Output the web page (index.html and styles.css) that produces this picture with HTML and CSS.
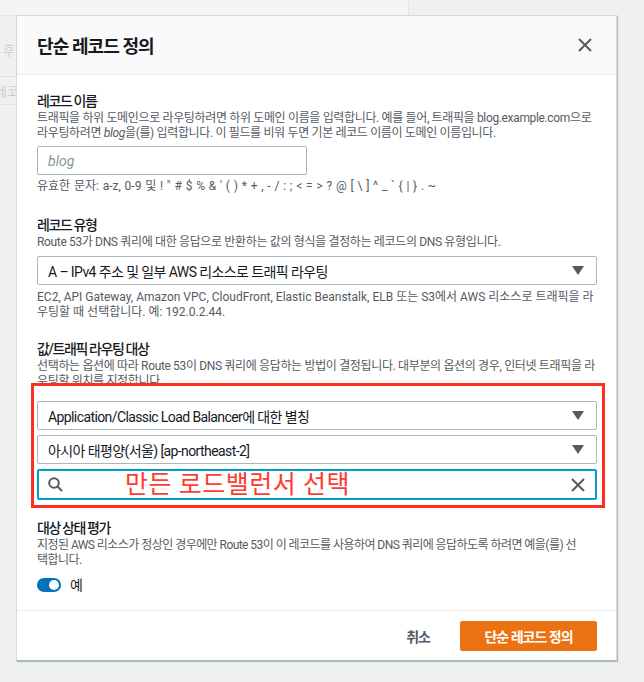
FILE: index.html
```html
<!DOCTYPE html>
<html lang="ko">
<head>
<meta charset="utf-8">
<title>단순 레코드 정의</title>
<link rel="stylesheet" href="styles.css">
</head>
<body>
<div class="bg-page">
  <div class="bg-strip"></div>
  <div class="bg-text">후</div>
  <div class="bg-cell"><span class="bg-cell-text">레코드</span></div>
</div>

<div class="modal">
  <div class="modal-header">
    <h2 class="modal-title">단순 레코드 정의</h2>
    <svg class="icon-close" width="14" height="14" viewBox="0 0 14 14"><path d="M1 1 L13 13 M13 1 L1 13" stroke="#545b64" stroke-width="2" fill="none"/></svg>
  </div>

  <div class="modal-body">
    <div class="field">
      <div class="label">레코드 이름</div>
      <div class="desc">트래픽을 하위 도메인으로 라우팅하려면 하위 도메인 이름을 입력합니다. 예를 들어, 트래픽을 blog.example.com으로<br>라우팅하려면 <i>blog</i>을(를) 입력합니다. 이 필드를 비워 두면 기본 레코드 이름이 도메인 이름입니다.</div>
      <div class="input short"><span class="placeholder">blog</span></div>
      <div class="desc hint chars">유효한 문자: a-z, 0-9 및 ! " # $ % &amp; ' ( ) * + , - / : ; &lt; = &gt; ? @ [ \ ] ^ _ ` { | } . ~</div>
    </div>

    <div class="field">
      <div class="label">레코드 유형</div>
      <div class="desc">Route 53가 DNS 쿼리에 대한 응답으로 반환하는 값의 형식을 결정하는 레코드의 DNS 유형입니다.</div>
      <div class="select"><span>A – IPv4 주소 및 일부 AWS 리소스로 트래픽 라우팅</span><span class="caret"></span></div>
      <div class="desc hint">EC2, API Gateway, Amazon VPC, CloudFront, Elastic Beanstalk, ELB 또는 S3에서 AWS 리소스로 트래픽을 라<br>우팅할 때 선택합니다. 예: 192.0.2.44.</div>
    </div>

    <div class="field target">
      <div class="label">값/트래픽 라우팅 대상</div>
      <div class="desc">선택하는 옵션에 따라 Route 53이 DNS 쿼리에 응답하는 방법이 결정됩니다. 대부분의 옵션의 경우, 인터넷 트래픽을 라<br>우팅할 위치를 지정합니다.</div>
      <div class="stack">
        <div class="select"><span>Application/Classic Load Balancer에 대한 별칭</span><span class="caret"></span></div>
        <div class="select"><span>아시아 태평양(서울) [ap-northeast-2]</span><span class="caret"></span></div>
        <div class="search">
          <svg class="icon-search" width="15" height="15" viewBox="0 0 15 15"><circle cx="6" cy="6" r="4.8" stroke="#545b64" stroke-width="2" fill="none"/><path d="M9.5 9.5 L14 14" stroke="#545b64" stroke-width="2"/></svg>
          <span class="annot-text">만든 로드밸런서 선택</span>
          <svg class="icon-clear" width="14" height="14" viewBox="0 0 14 14"><path d="M1 1 L13 13 M13 1 L1 13" stroke="#545b64" stroke-width="2" fill="none"/></svg>
        </div>
      </div>
      <div class="annot-box"></div>
    </div>

    <div class="field last">
      <div class="label">대상 상태 평가</div>
      <div class="desc tight">지정된 AWS 리소스가 정상인 경우에만 Route 53이 이 레코드를 사용하여 DNS 쿼리에 응답하도록 하려면 예을(를) 선<br>택합니다.</div>
      <div class="toggle-row"><span class="toggle"><span class="knob"></span></span><span class="toggle-label">예</span></div>
    </div>
  </div>

  <div class="modal-footer">
    <button class="btn-link">취소</button>
    <button class="btn-primary">단순 레코드 정의</button>
  </div>
</div>
</body>
</html>
```

FILE: styles.css
```css
* { box-sizing: border-box; }
html, body { margin: 0; padding: 0; }
body {
  width: 644px;
  height: 682px;
  background: #eff0f0;
  font-family: Roboto, "Noto Sans CJK KR", sans-serif;
  color: #16191f;
  position: relative;
  overflow: hidden;
}

/* faded page behind the modal */
.bg-page { width: 409px; }
.bg-strip {
  height: 16px;
  background: #f3f4f4;
  border-right: 1px solid #e3e5e5;
  border-bottom: 1px solid #e3e5e5;
}
.bg-text {
  margin-top: 24px;
  padding-left: 3px;
  font-size: 13px;
  color: #c9cdcd;
  height: 20px;
}
.bg-cell {
  margin-top: 16px;
  height: 29px;
  border-top: 1px solid #e1e3e3;
  border-bottom: 1px solid #e1e3e3;
  overflow: hidden;
  line-height: 27px;
}
.bg-cell-text {
  margin-left: -5px;
  font-size: 13px;
  color: #c9cdcd;
}

/* modal overlay */
.modal {
  position: absolute;
  left: 16px;
  top: 15px;
  width: 601px;
  background: #fff;
  border: 1px solid #d5dbdb;
  border-bottom-color: #aab7b8;
  box-shadow: 1px 1px 1px rgba(0, 28, 36, 0.25);
}
.modal-header {
  height: 59px;
  background: #fafafa;
  border-bottom: 1px solid #eaeded;
  display: flex;
  align-items: center;
  justify-content: space-between;
  padding: 0 24px 0 20px;
}
.modal-title {
  margin: 0;
  font-size: 18px;
  font-weight: 700;
  letter-spacing: -0.9px;
  color: #16191f;
}
.icon-close { display: block; }

.modal-body {
  padding: 16px 19px 18px 20px;
  display: flex;
  flex-direction: column;
  gap: 19px;
}
.field { display: flex; flex-direction: column; }
.field.last { margin-top: -1px; }
.label {
  font-size: 14px;
  line-height: 20px;
  font-weight: 500;
  letter-spacing: -1.4px;
  color: #16191f;
}
.desc {
  font-size: 12px;
  line-height: 15px;
  letter-spacing: -0.35px;
  color: #545b64;
}
.desc.tight { letter-spacing: -0.55px; }
.desc i { font-style: italic; }
.hint { margin-top: 5px; letter-spacing: 0; }
.chars {
  margin-top: 4px;
  margin-bottom: 2px;
  word-spacing: 0.8px;
}

.input {
  margin-top: 5px;
  height: 29px;
  border: 1px solid #aab7b8;
  border-radius: 2px;
  display: flex;
  align-items: center;
  padding: 0 10px;
}
.input.short { width: 270px; }
.placeholder {
  font-size: 14px;
  font-style: italic;
  color: #879596;
}

.select {
  margin-top: 6px;
  height: 29px;
  border: 1px solid #aab7b8;
  border-radius: 2px;
  display: flex;
  align-items: center;
  justify-content: space-between;
  padding: 0 12px 0 10px;
  font-size: 14px;
  letter-spacing: -0.6px;
  color: #16191f;
}
.caret {
  width: 0;
  height: 0;
  border-left: 6px solid transparent;
  border-right: 6px solid transparent;
  border-top: 9px solid #545b64;
}

.target { position: relative; }
.stack { display: flex; flex-direction: column; margin-top: 12px; }
.stack .select { margin-top: 5px; }
.stack .select:first-child { margin-top: 0; }
.stack .search { margin-top: 5px; }
.search {
  height: 31px;
  border: 2px solid #00a1c9;
  border-radius: 2px;
  display: flex;
  align-items: center;
  padding: 0 10px 0 9px;
}
.icon-search { display: block; }
.annot-text {
  margin-left: 62px;
  flex: 1;
  font-size: 25px;
  letter-spacing: 0.5px;
  color: #ff3b30;
  line-height: 27px;
}
.icon-clear { display: block; }

.annot-box {
  position: absolute;
  left: -6px;
  right: -8px;
  top: 44px;
  bottom: -8px;
  border: 3px solid #ff2d1f;
  pointer-events: none;
}

.toggle-row {
  margin-top: 10px;
  height: 14px;
  display: flex;
  align-items: center;
  gap: 9px;
}
.toggle {
  width: 24px;
  height: 14px;
  border-radius: 7px;
  background: #0073bb;
  display: flex;
  align-items: center;
  justify-content: flex-end;
  padding: 0 2px;
}
.knob {
  width: 10px;
  height: 10px;
  border-radius: 50%;
  background: #fff;
}
.toggle-label {
  font-size: 14px;
  line-height: 14px;
  color: #16191f;
}

.modal-footer {
  height: 50px;
  border-top: 1px solid #eaeded;
  display: flex;
  align-items: center;
  justify-content: flex-end;
  gap: 30px;
  padding: 0 19px 0 20px;
}
.btn-link {
  background: none;
  border: none;
  padding: 0;
  font-family: inherit;
  font-size: 14px;
  font-weight: 700;
  letter-spacing: -1px;
  color: #545b64;
}
.btn-primary {
  width: 137px;
  height: 30px;
  background: #ec7211;
  border: 1px solid #ec7211;
  border-radius: 2px;
  font-family: inherit;
  font-size: 14px;
  font-weight: 700;
  letter-spacing: -1px;
  color: #fff;
  padding: 0;
}
```
